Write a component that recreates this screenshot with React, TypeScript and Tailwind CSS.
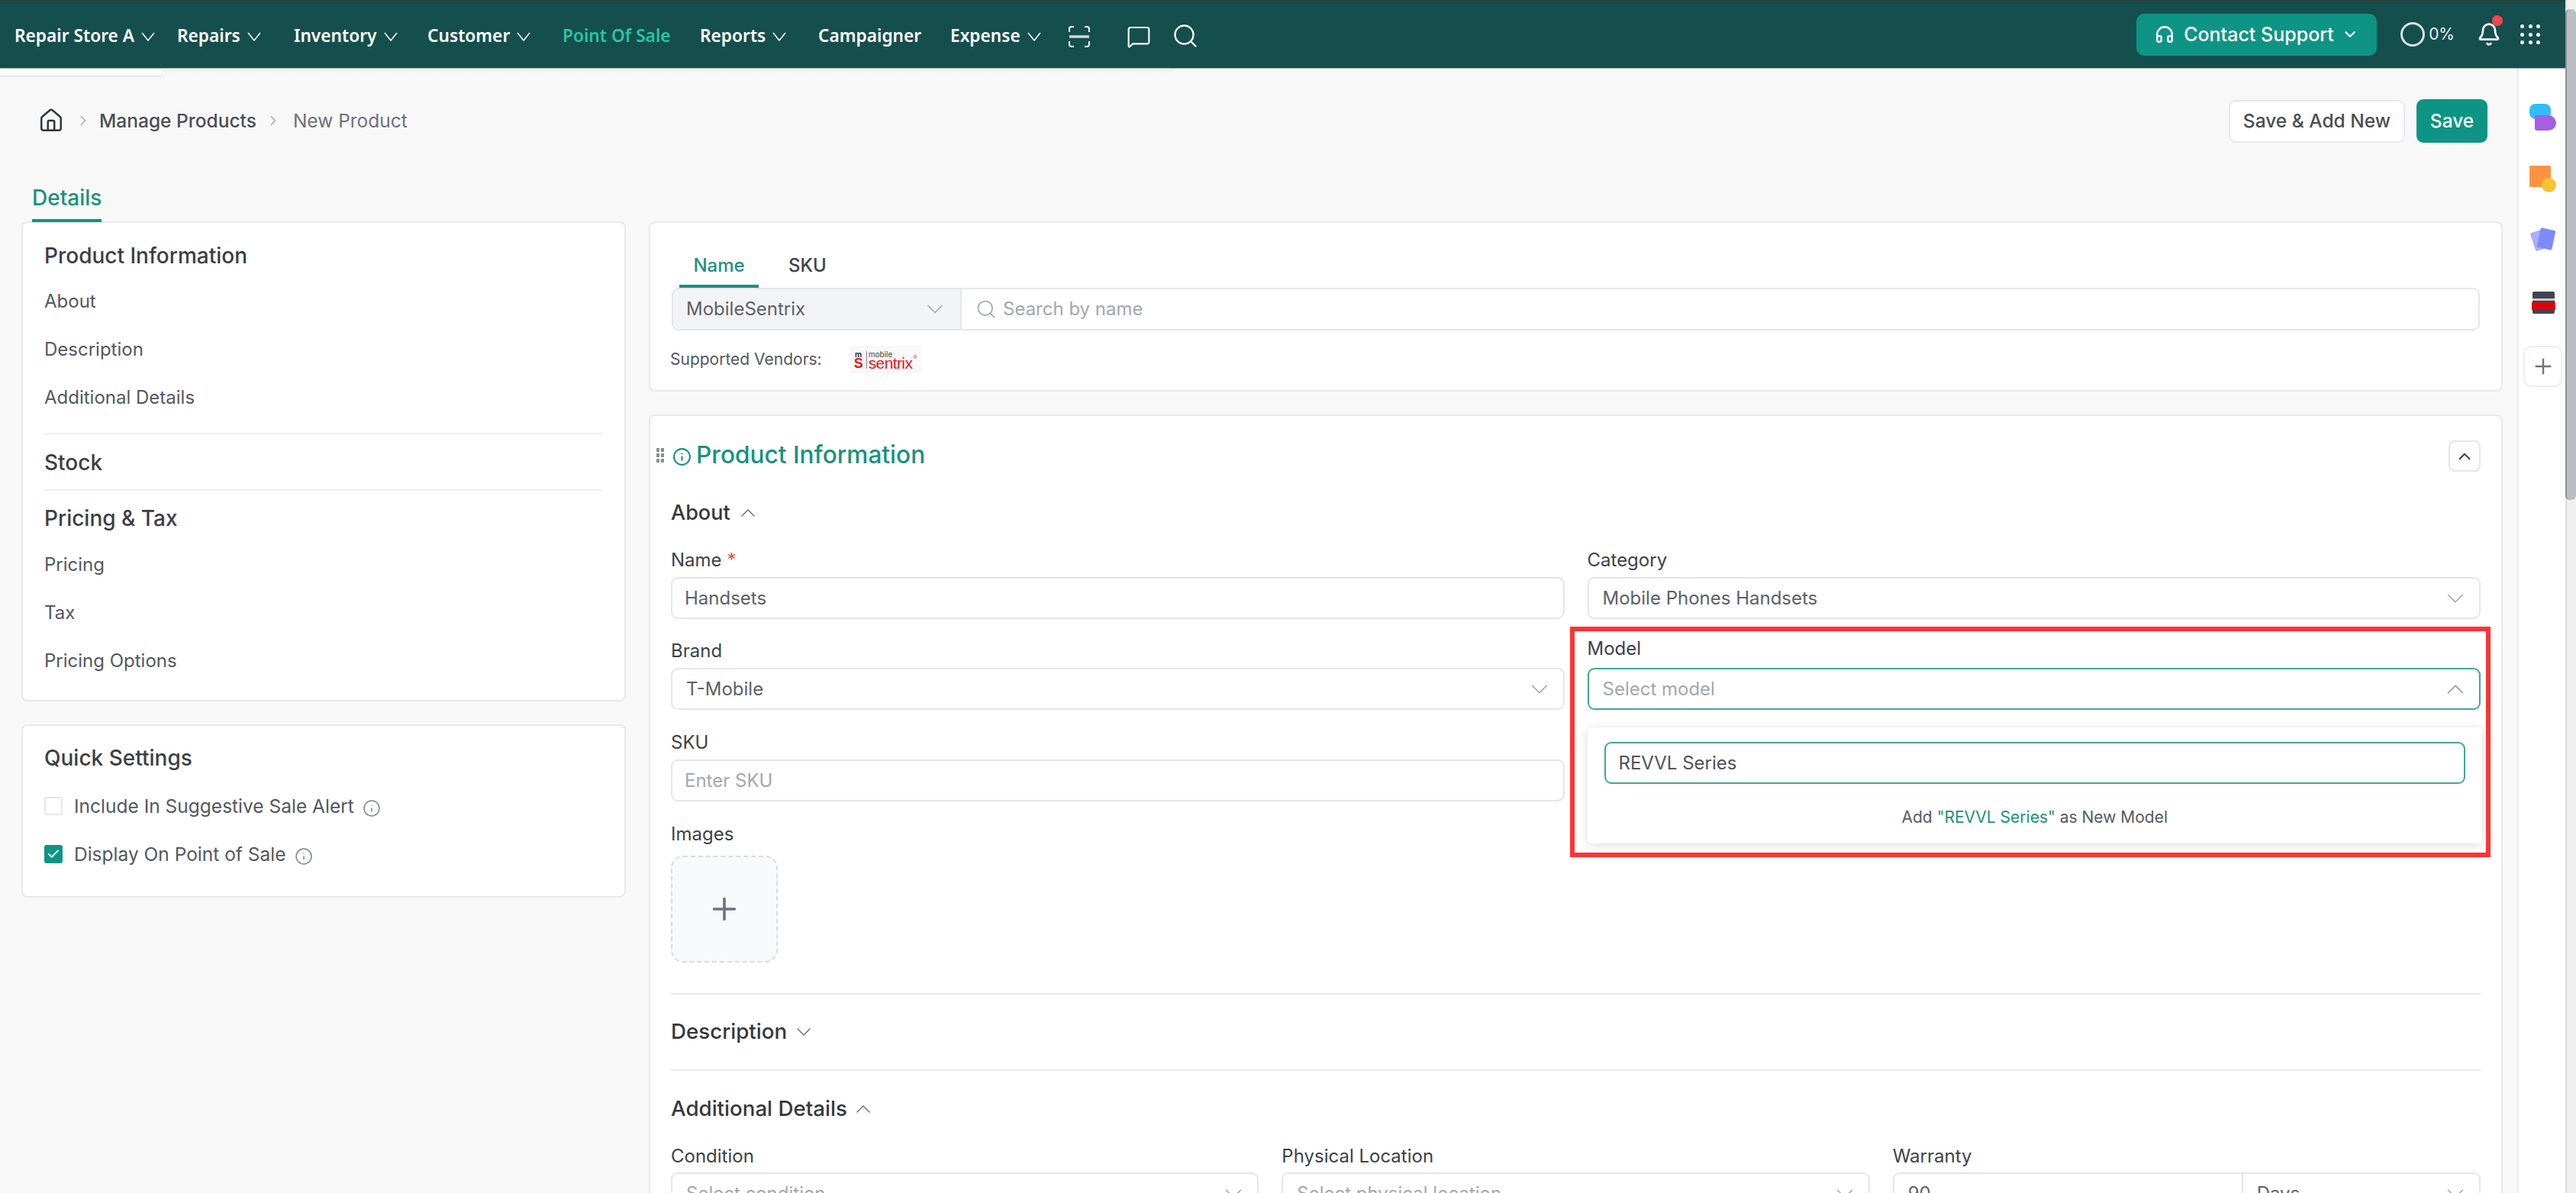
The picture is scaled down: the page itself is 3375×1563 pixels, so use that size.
import { ChevronDown, ChevronUp, ChevronRight, Search, Plus, Headphones, Bell, Info, Check, House, MessageSquare } from 'lucide-react';

const navItems = [
  { label: 'Repair Store A', w: 'w-[212px]', pl: 'pl-[19px]', arrow: true },
  { label: 'Repairs', w: 'w-[153px]', pl: 'pl-[20px]', arrow: true },
  { label: 'Inventory', w: 'w-[175px]', pl: 'pl-[20px]', arrow: true },
  { label: 'Customer', w: 'w-[177px]', pl: 'pl-[20px]', arrow: true },
  { label: 'Point Of Sale', w: 'w-[180px]', pl: 'pl-[20px]', active: true },
  { label: 'Reports', w: 'w-[155px]', pl: 'pl-[20px]', arrow: true },
  { label: 'Campaigner', w: 'w-[173px]', pl: 'pl-[20px]' },
  { label: 'Expense', w: 'w-[155px]', pl: 'pl-[20px]', arrow: true },
];

function Field({ label, required, children, className }: { label: string; required?: boolean; children: React.ReactNode; className?: string }) {
  return (
    <div className={className}>
      <div className="h-[28px] flex items-center text-[24px] text-[#3d4248]">
        {label}
        {required && <span className="ml-[7px] text-[#ef4444]">*</span>}
      </div>
      {children}
    </div>
  );
}

function Box({ text, placeholder, chevron, up, focus }: { text: string; placeholder?: boolean; chevron?: boolean; up?: boolean; focus?: boolean }) {
  return (
    <div className={`h-[55px] rounded-[9px] border-2 bg-white flex items-center justify-between ${chevron ? 'pl-[18px] pr-[12px]' : 'pl-[16px] pr-[16px]'} text-[24px] ${focus ? 'border-[#3fa897]' : 'border-[#e4e6ee]'} ${placeholder ? 'text-[#a3a7ae]' : 'text-[#5b6168]'}`}>
      <span>{text}</span>
      {chevron && (up
        ? <ChevronUp className="w-[38px] h-[38px] text-[#8d929a]" strokeWidth={1} />
        : <ChevronDown className="w-[38px] h-[38px] text-[#a0a4ab]" strokeWidth={1} />)}
    </div>
  );
}

function SideLink({ children }: { children: string }) {
  return <div className="h-[63px] flex items-center text-[24px] text-[#53585f]">{children}</div>;
}

function SideTitle({ children }: { children: string }) {
  return <div className="text-[28px] font-medium text-[#3a3f45] leading-[34px]">{children}</div>;
}

function NavArrow() {
  return (
    <svg className="ml-[9px] shrink-0" width="18" height="12" viewBox="0 0 18 12" fill="none" stroke="#fff" strokeWidth="1.5">
      <path d="M1 1l8 10 8-10" />
    </svg>
  );
}

function RightIcons() {
  return (
    <div className="w-[63px] shrink-0 bg-white border-l-2 border-[#e9eaf0] relative flex flex-col items-center">
      <div className="relative w-[36px] h-[36px] mt-[46px] ml-[3px]">
        <div className="absolute left-0 top-0 w-[28px] h-[20px] rounded-[8px] bg-[#33bdf7]" />
        <div className="absolute left-[7px] top-[15px] w-[28px] h-[20px] rounded-r-[10px] rounded-l-[3px] bg-[#a45fe3]" />
      </div>
      <div className="relative w-[36px] h-[36px] mt-[45px] ml-[3px]">
        <div className="absolute left-0 top-0 w-[28px] h-[28px] rounded-[2px] bg-[#fd9341]" />
        <div className="absolute left-[16px] top-[16px] w-[19px] h-[19px] rounded-full bg-[#f4c52f]" />
      </div>
      <svg className="mt-[44px] ml-[3px]" width="36" height="36" viewBox="0 0 36 36">
        <rect x="4" y="5" width="20" height="25" rx="2" fill="#a7aff9" transform="rotate(-18 14 17)" />
        <rect x="12" y="3" width="20" height="26" rx="2" fill="#7d8cfa" transform="rotate(12 22 16)" />
      </svg>
      <div className="mt-[49px] ml-[3px] w-[29px] h-[29px] rounded-[2px] bg-[#3f444e] relative">
        <div className="absolute left-0 right-0 top-[9px] h-[3px] bg-[#c9cbd0]" />
        <div className="absolute left-[-1px] right-[-1px] top-[14px] h-[10px] bg-[#dd0011]" />
      </div>
      <div className="mt-[42px] ml-[2px] w-[51px] h-[54px] rounded-[10px] border-2 border-[#eceef2] flex items-center justify-center">
        <Plus className="w-[32px] h-[32px] text-[#6e7480]" strokeWidth={1.8} />
      </div>
    </div>
  );
}

export default function App() {
  return (
    <div className="w-[3375px] h-[1563px] overflow-hidden flex bg-[#f8f8f8] font-['Inter',sans-serif]">
      <div className="w-[3361px] flex flex-col">
        {/* top bar */}
        <div className="relative h-[90px] shrink-0 bg-[#154f4d] border-t border-[#2f3a3a] border-b border-b-[#9fb5b3] flex items-center font-['Noto_Sans',sans-serif] font-semibold text-[22.7px] text-white">
          <div className="absolute left-0 top-[90px] w-[212px] h-[8px] bg-white/60 shadow-sm" />
          <div className="absolute left-[212px] top-[90px] w-[1325px] h-[5px] bg-linear-to-b from-[#eeefef] to-transparent" />
          {navItems.map(n => (
            <div key={n.label} className={`${n.w} ${n.pl} pt-[5px] shrink-0 flex items-center h-full ${n.active ? 'text-[#2ac3a5]' : ''}`}>
              <span>{n.label}</span>
              {n.arrow && <NavArrow />}
            </div>
          ))}
          <svg className="ml-[20px] mt-[6px] shrink-0" width="28" height="28" viewBox="0 0 28 28" fill="none" stroke="#fff" strokeWidth="2">
            <path d="M1 8V4a3 3 0 0 1 3-3h3M21 1h3a3 3 0 0 1 3 3v4M1 20v4a3 3 0 0 0 3 3h3M27 20v4a3 3 0 0 1-3 3h-3" />
            <path d="M1 14h26" strokeWidth="3.5" opacity="0.8" />
          </svg>
          <MessageSquare className="ml-[48px] mt-[6px] w-[32px] h-[32px] text-white" strokeWidth={1.6} />
          <Search className="ml-[27px] mt-[4px] w-[36px] h-[36px] text-white" strokeWidth={1.6} />
          <div className="ml-auto flex items-center">
            <div className="w-[315px] h-[55px] rounded-[10px] bg-[#0e9484] flex items-center pl-[24px] font-['Inter',sans-serif] font-medium text-[25px]">
              <Headphones className="w-[26px] h-[26px]" strokeWidth={2.2} />
              <span className="ml-[12px] mt-[1px]">Contact Support</span>
              <ChevronDown className="ml-[10px] w-[22px] h-[22px]" strokeWidth={2.4} />
            </div>
            <div className="ml-[31px] w-[32px] h-[32px] rounded-full border-[3px] border-[#d8e2e1]" />
            <span className="ml-[5px] font-['Inter',sans-serif] font-normal text-[21px] text-[#e8efee]">0%</span>
            <div className="relative ml-[29px]">
              <Bell className="w-[32px] h-[32px]" strokeWidth={2} />
              <div className="absolute left-[20px] top-[-9px] w-[14px] h-[14px] rounded-full bg-[#f0484e]" />
            </div>
            <div className="ml-[25px] mr-[33px] grid grid-cols-3 gap-[5.5px]">
              {[0, 1, 2, 3, 4, 5, 6, 7, 8].map(i => <div key={i} className="w-[5px] h-[5px] rounded-full bg-white" />)}
            </div>
          </div>
        </div>

        <div className="flex flex-1 min-h-0">
          <div className="w-[3298px] shrink-0">
            {/* breadcrumb + actions */}
            <div className="flex items-center justify-between h-[57px] mt-[40px] pl-[50px] pr-[39px]">
              <div className="flex items-center text-[24.5px] mt-[-1px]">
                <House className="w-[34px] h-[34px] text-[#2f3338]" strokeWidth={1.7} />
                <ChevronRight className="ml-[14px] w-[22px] h-[22px] text-[#a6a9ae]" strokeWidth={1.6} />
                <span className="ml-[10px] font-medium text-[#4a4f55]">Manage Products</span>
                <ChevronRight className="ml-[11px] w-[22px] h-[22px] text-[#a6a9ae]" strokeWidth={1.6} />
                <span className="ml-[15px] text-[#6d7278]">New Product</span>
              </div>
              <div className="flex items-center gap-[15px] font-medium text-[24.5px]">
                <div className="w-[231px] h-[56px] rounded-[9px] border-2 border-[#e7e8ee] bg-white flex items-center justify-center text-[#4a4e54]">Save &amp; Add New</div>
                <div className="w-[93px] h-[57px] rounded-[9px] bg-[#0e9484] flex items-center justify-center text-white">Save</div>
              </div>
            </div>

            <div className="ml-[42px] mt-[52px] w-[91px] h-[54px] text-[28px] text-[#19927f] font-medium leading-[30px] text-center">
              <div className="h-[48px] pt-[5px] whitespace-nowrap">Details</div>
              <div className="h-[4px] bg-[#0e9484] relative z-10" />
            </div>

            <div className="flex gap-[30px] ml-[28px] mt-[-3px] items-start">
              {/* left column */}
              <div className="w-[792px] shrink-0 flex flex-col gap-[30px]">
                <div className="h-[629px] rounded-[8px] border-2 border-[#e8e9ef] bg-white pl-[28px] pr-[29px] pt-[26px]">
                  <SideTitle>Product Information</SideTitle>
                  <div className="mt-[11px]">
                    <SideLink>About</SideLink>
                    <SideLink>Description</SideLink>
                    <SideLink>Additional Details</SideLink>
                  </div>
                  <div className="h-[2px] bg-[#eef0f3] mt-[15px]" />
                  <div className="pt-[20px] pb-[18px]"><SideTitle>Stock</SideTitle></div>
                  <div className="h-[2px] bg-[#eef0f3]" />
                  <div className="mt-[19px]"><SideTitle>Pricing &amp; Tax</SideTitle></div>
                  <div className="mt-[12px]">
                    <SideLink>Pricing</SideLink>
                    <SideLink>Tax</SideLink>
                    <SideLink>Pricing Options</SideLink>
                  </div>
                </div>
                <div className="h-[227px] rounded-[8px] border-2 border-[#e8e9ef] bg-white pl-[28px] pr-[29px] pt-[25px]">
                  <SideTitle>Quick Settings</SideTitle>
                  <div className="mt-[33px] flex items-center h-[26px] text-[24.5px] text-[#53585f]">
                    <div className="w-[24px] h-[24px] rounded-[3px] border-2 border-[#e4e6ea]" />
                    <span className="ml-[15px]">Include In Suggestive Sale Alert</span>
                    <Info className="ml-[11px] mt-[5px] w-[24px] h-[24px] text-[#7f848a]" strokeWidth={1.5} />
                  </div>
                  <div className="mt-[37px] flex items-center h-[26px] text-[24.5px] text-[#53585f]">
                    <div className="w-[24px] h-[24px] rounded-[3px] bg-[#0e9484] flex items-center justify-center">
                      <Check className="w-[18px] h-[18px] text-white" strokeWidth={2.5} />
                    </div>
                    <span className="ml-[15px]">Display On Point of Sale</span>
                    <Info className="ml-[11px] mt-[5px] w-[24px] h-[24px] text-[#7f848a]" strokeWidth={1.5} />
                  </div>
                </div>
              </div>

              {/* right column */}
              <div className="w-[2429px] shrink-0 flex flex-col gap-[30px]">
                <div className="h-[223px] rounded-[8px] border-2 border-[#e8e9ef] bg-white pl-[28px] pr-[28px]">
                  <div className="flex h-[85px] ml-[10px] text-[24px] font-medium">
                    <div className="w-[104px] h-[85px] flex flex-col justify-end">
                      <div className="text-center text-[#19927f] pb-[7px]">Name</div>
                      <div className="h-[4px] bg-[#0e9484]" />
                    </div>
                    <div className="ml-[39px] pb-[11px] self-end text-[#3d4248]">SKU</div>
                  </div>
                  <div className="flex h-[56px] rounded-[9px] border-2 border-[#e4e6ee] overflow-hidden text-[24px]">
                    <div className="w-[378px] shrink-0 bg-[#f3f4f8] border-r-2 border-[#e4e6ee] flex items-center justify-between pl-[17px] pr-[15px] text-[#5b6168]">
                      <span>MobileSentrix</span>
                      <ChevronDown className="w-[36px] h-[36px] text-[#a0a4ab]" strokeWidth={1.05} />
                    </div>
                    <div className="flex-1 flex items-center pl-[18px] text-[#a3a7ae]">
                      <Search className="w-[28px] h-[28px]" strokeWidth={1.5} />
                      <span className="ml-[8px]">Search by name</span>
                    </div>
                  </div>
                  <div className="mt-[20px] ml-[-2px] flex items-center text-[21px] text-[#53585f]">
                    <span>Supported Vendors:</span>
                    <div className="ml-[36px] w-[94px] h-[36px] bg-[#f8f8f8] flex items-center pl-[6px] leading-none">
                      <div className="w-[12px] flex flex-col items-center">
                        <span className="text-[10px] leading-[9px] font-bold text-[#333]">m</span>
                        <span className="text-[18px] leading-[14px] font-bold font-['Liberation_Sans',sans-serif] text-[#e8121c]">S</span>
                      </div>
                      <div className="ml-[4px] flex flex-col border-l border-[#888] pl-[2px]">
                        <span className="text-[10px] leading-[8px] text-[#444]">mobile</span>
                        <span className="text-[21px] leading-[15px] font-['Liberation_Sans',sans-serif] tracking-[-0.6px] text-[#e8121c]">sentrix</span>
                      </div>
                      <span className="ml-[1px] mt-[-6px] text-[8px] text-[#777]">®</span>
                    </div>
                  </div>
                </div>

                <div className="h-[1100px] rounded-[8px] border-2 border-[#e8e9ef] bg-white relative px-[27px]">
                  <div className="absolute right-[27px] top-[32px] w-[42px] h-[41px] rounded-[8px] border-2 border-[#e4e6ee] flex items-center justify-center">
                    <ChevronUp className="w-[26px] h-[26px] text-[#3d4248]" strokeWidth={1.8} />
                  </div>
                  <div className="flex items-center h-[40px] mt-[31px] ml-[-19px] relative">
                    <div className="grid grid-cols-2 gap-[2px] w-[10px]">
                      {[0, 1, 2, 3, 4, 5].map(i => <div key={i} className="w-[4px] h-[5px] bg-[#8b8f95]" />)}
                    </div>
                    <Info className="ml-[11px] mt-[4px] w-[25px] h-[25px] text-[#19927f]" strokeWidth={2} />
                    <span className="ml-[6px] text-[31.6px] font-medium text-[#19927f]">Product Information</span>
                  </div>
                  <div className="mt-[39px] flex items-center text-[27px] font-medium text-[#34383d] h-[34px]">
                    About
                    <ChevronUp className="ml-[7px] w-[32px] h-[32px] text-[#777c83]" strokeWidth={1.3} />
                  </div>

                  <div className="grid grid-cols-2 gap-x-[30px] mt-[31px]">
                    <div>
                      <Field label="Name" required className="mb-[28px]"><div className="mt-[8px]"><Box text="Handsets" /></div></Field>
                      <Field label="Brand" className="mb-[29px]"><div className="mt-[8px]"><Box text="T-Mobile" chevron /></div></Field>
                      <Field label="SKU" className="mb-[29px]"><div className="mt-[8px]"><Box text="Enter SKU" placeholder /></div></Field>
                      <Field label="Images">
                        <div className="mt-[14px] w-[140px] h-[140px] rounded-[16px] border-2 border-dashed border-[#d9dbe0] bg-[#f8f9fb] flex items-center justify-center">
                          <Plus className="w-[46px] h-[46px] text-[#6e7480]" strokeWidth={1.9} />
                        </div>
                      </Field>
                    </div>
                    <div>
                      <Field label="Category" className="mb-[25px]"><div className="mt-[8px]"><Box text="Mobile Phones Handsets" chevron /></div></Field>
                      <div className="relative">
                        <Field label="Model"><div className="mt-[11px]"><Box text="Select model" placeholder chevron up focus /></div></Field>
                        <div className="absolute left-0 right-[-2px] top-[117px] h-[152px] rounded-[6px] bg-white shadow-[0_2px_14px_rgba(40,45,60,0.16)] px-[22px] pt-[19px] z-10">
                          <div className="h-[55px] rounded-[9px] border-2 border-[#3fa897] flex items-center pl-[17px] text-[24px] text-[#4f545a]">REVVL Series</div>
                          <div className="mt-[28px] text-center text-[21px] text-[#555a62]">
                            Add <span className="text-[#19927f]">"REVVL Series"</span> as New Model
                          </div>
                        </div>
                        <div className="absolute left-[-23px] right-[-13px] top-[-15px] h-[302px] border-[6px] border-[#ff3333] z-20" />
                      </div>
                    </div>
                  </div>

                  <div className="h-[2px] bg-[#e8e9ef] mt-[40px]" />
                  <div className="h-[98px] flex items-center text-[27.7px] font-medium text-[#34383d]">
                    Description
                    <ChevronDown className="ml-[6px] w-[32px] h-[32px] text-[#777c83]" strokeWidth={1.3} />
                  </div>
                  <div className="h-[2px] bg-[#e8e9ef]" />
                  <div className="h-[100px] flex items-center text-[27.7px] font-medium text-[#34383d]">
                    Additional Details
                    <ChevronUp className="ml-[5px] w-[32px] h-[32px] text-[#777c83]" strokeWidth={1.3} />
                  </div>
                  <div className="grid grid-cols-3 gap-x-[30px] mt-[-2px]">
                    <Field label="Condition"><div className="mt-[7px]"><Box text="Select condition" placeholder chevron /></div></Field>
                    <Field label="Physical Location"><div className="mt-[7px]"><Box text="Select physical location" placeholder chevron /></div></Field>
                    <Field label="Warranty">
                      <div className="mt-[7px] h-[55px] rounded-[9px] border-2 border-[#e4e6ee] flex text-[24px] text-[#5b6168]">
                        <div className="w-[457px] border-r-2 border-[#e4e6ee] pl-[18px] flex items-center">90</div>
                        <div className="flex-1 pl-[18px] pr-[12px] flex items-center justify-between">
                          Days
                          <ChevronDown className="w-[38px] h-[38px] text-[#a0a4ab]" strokeWidth={1} />
                        </div>
                      </div>
                    </Field>
                  </div>
                </div>
              </div>
            </div>
          </div>
          <RightIcons />
        </div>
      </div>

      {/* scrollbar */}
      <div className="w-[14px] shrink-0 bg-[#efefef] border-l-2 border-[#dcdcdc] relative">
        <div className="absolute left-[-2px] right-0 top-[12px] h-[643px] bg-[#bcbec3] border-l-2 border-[#8f9194] rounded-t-[6px] rounded-b-[6px]" />
      </div>
    </div>
  );
}
